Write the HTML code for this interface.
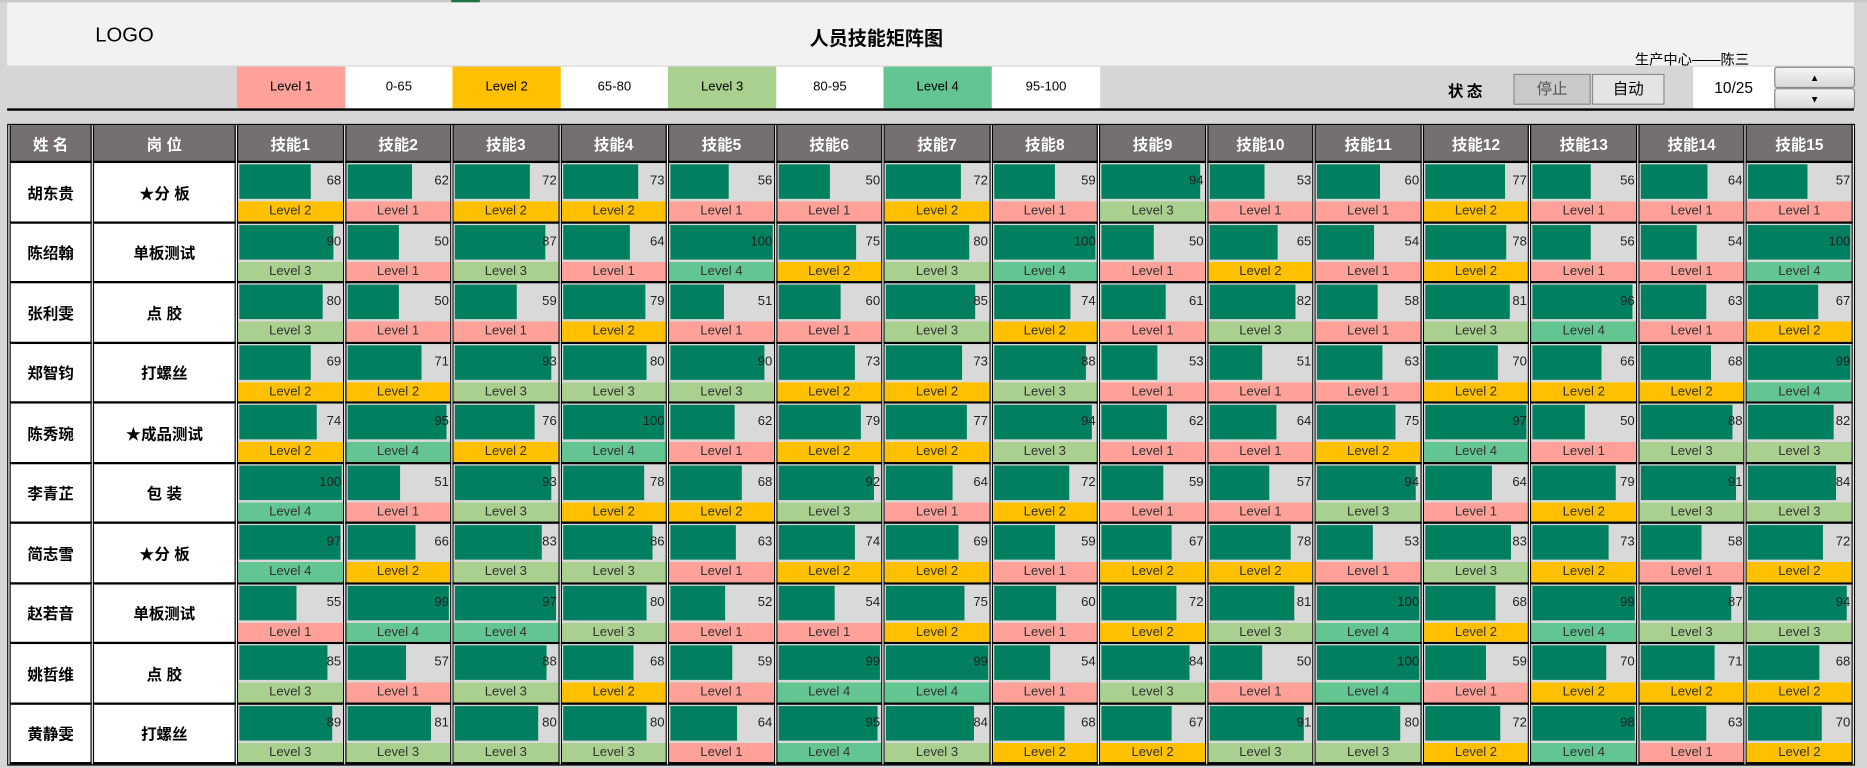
<!DOCTYPE html>
<html><head><meta charset="utf-8"><style>
html,body{margin:0;padding:0;width:1867px;height:768px;overflow:hidden;background:#d6d6d6}
#w{position:absolute;left:0;top:0;width:1568px;height:645px;transform:scale(1.19069);transform-origin:0 0;background:#d6d6d6;font-family:"Liberation Sans","Noto Sans CJK SC",sans-serif}
.a{position:absolute}
#top{left:6px;top:2px;width:1551px;height:53px;background:#f2f2f2}
.lg{position:absolute;top:56px;height:35px;line-height:35px;text-align:center;font-size:11px;color:#000}
.btn{position:absolute;border:1px solid #8c8c8c;font-size:13px;text-align:center;box-sizing:border-box}
table{position:absolute;left:6px;top:104px;width:1552px;border-collapse:separate;border-spacing:1px 0;background:#fff;table-layout:fixed;border:1px solid #000;border-top:1px solid #000}
td,th{padding:0;margin:0}
th{background:#757070;color:#fff;font-size:13px;font-weight:bold;height:30px;border-left:1px solid #000;border-right:1px solid #000;border-bottom:2px solid #000}
td{border-left:1px solid #000;border-right:1px solid #000;border-bottom:2px solid #000;vertical-align:top;height:48.5px}
td.n{font-size:13px;font-weight:bold;text-align:center;vertical-align:middle;background:#fff}
.t{position:relative;height:32px;background:#d9d9d9}
.t i{position:absolute;left:1px;top:1px;height:29px;background:#008060}
.t b{position:absolute;right:1px;top:9px;font-size:11px;font-weight:normal;color:#222}
.l{height:16.5px;line-height:17px;text-align:center;font-size:11px;color:#333}
.l1{background:#ffa198}.l2{background:#ffc000}.l3{background:#a9d08e}.l4{background:#63c592}
</style></head><body><div id="w">
<div class="a" style="left:0;top:0;width:1568px;height:2px;background:#c8c8c8"></div>
<div class="a" style="left:379px;top:0;width:24px;height:2px;background:#217346"></div>
<div class="a" id="top"></div>
<div class="a" style="left:80px;top:20px;font-size:17px">LOGO</div>
<div class="a" style="left:680px;top:19px;font-size:16px;font-weight:bold">人员技能矩阵图</div>
<div class="a" style="left:1373px;top:41px;font-size:12px">生产中心——陈三</div>
<div class="lg l1" style="left:199px;width:91px">Level 1</div>
<div class="lg" style="left:290px;width:90px;background:#fff">0-65</div>
<div class="lg l2" style="left:380px;width:91px">Level 2</div>
<div class="lg" style="left:471px;width:90px;background:#fff">65-80</div>
<div class="lg l3" style="left:561px;width:91px">Level 3</div>
<div class="lg" style="left:652px;width:90px;background:#fff">80-95</div>
<div class="lg l4" style="left:742px;width:91px">Level 4</div>
<div class="lg" style="left:833px;width:91px;background:#fff">95-100</div>
<div class="a" style="left:1216px;top:66px;font-size:13px;font-weight:bold;letter-spacing:3px">状态</div>
<div class="btn" style="left:1271px;top:62px;width:65px;height:26px;line-height:24px;background:#c9c9c9;color:#555">停止</div>
<div class="btn" style="left:1337px;top:62px;width:61px;height:26px;line-height:24px;background:#e4e4e4">自动</div>
<div class="a" style="left:1422px;top:56px;width:68px;height:35px;line-height:36px;background:#fff;text-align:center;font-size:13px">10/25</div>
<div class="btn" style="left:1490px;top:56px;width:68px;height:18px;border-radius:3px;background:linear-gradient(#f4f4f4,#d8d8d8);font-size:8px;line-height:17px">▲</div>
<div class="btn" style="left:1490px;top:74px;width:68px;height:18px;border-radius:3px;background:linear-gradient(#f4f4f4,#d8d8d8);font-size:8px;line-height:18px">▼</div>
<div class="a" style="left:6px;top:91px;width:1551px;height:2px;background:#000"></div>
<table>
<colgroup><col style="width:69px"><col style="width:120px"><col span="15"></colgroup>
<tr><th>姓 名</th><th>岗 位</th><th>技能1</th><th>技能2</th><th>技能3</th><th>技能4</th><th>技能5</th><th>技能6</th><th>技能7</th><th>技能8</th><th>技能9</th><th>技能10</th><th>技能11</th><th>技能12</th><th>技能13</th><th>技能14</th><th>技能15</th></tr>
<tr><td class="n">胡东贵</td><td class="n">★分 板</td>
<td><div class="t"><i style="width:68%"></i><b>68</b></div><div class="l l2">Level 2</div></td>
<td><div class="t"><i style="width:62%"></i><b>62</b></div><div class="l l1">Level 1</div></td>
<td><div class="t"><i style="width:72%"></i><b>72</b></div><div class="l l2">Level 2</div></td>
<td><div class="t"><i style="width:73%"></i><b>73</b></div><div class="l l2">Level 2</div></td>
<td><div class="t"><i style="width:56%"></i><b>56</b></div><div class="l l1">Level 1</div></td>
<td><div class="t"><i style="width:50%"></i><b>50</b></div><div class="l l1">Level 1</div></td>
<td><div class="t"><i style="width:72%"></i><b>72</b></div><div class="l l2">Level 2</div></td>
<td><div class="t"><i style="width:59%"></i><b>59</b></div><div class="l l1">Level 1</div></td>
<td><div class="t"><i style="width:94%"></i><b>94</b></div><div class="l l3">Level 3</div></td>
<td><div class="t"><i style="width:53%"></i><b>53</b></div><div class="l l1">Level 1</div></td>
<td><div class="t"><i style="width:60%"></i><b>60</b></div><div class="l l1">Level 1</div></td>
<td><div class="t"><i style="width:77%"></i><b>77</b></div><div class="l l2">Level 2</div></td>
<td><div class="t"><i style="width:56%"></i><b>56</b></div><div class="l l1">Level 1</div></td>
<td><div class="t"><i style="width:64%"></i><b>64</b></div><div class="l l1">Level 1</div></td>
<td><div class="t"><i style="width:57%"></i><b>57</b></div><div class="l l1">Level 1</div></td></tr>
<tr><td class="n">陈绍翰</td><td class="n">单板测试</td>
<td><div class="t"><i style="width:90%"></i><b>90</b></div><div class="l l3">Level 3</div></td>
<td><div class="t"><i style="width:50%"></i><b>50</b></div><div class="l l1">Level 1</div></td>
<td><div class="t"><i style="width:87%"></i><b>87</b></div><div class="l l3">Level 3</div></td>
<td><div class="t"><i style="width:64%"></i><b>64</b></div><div class="l l1">Level 1</div></td>
<td><div class="t"><i style="width:98%"></i><b>100</b></div><div class="l l4">Level 4</div></td>
<td><div class="t"><i style="width:75%"></i><b>75</b></div><div class="l l2">Level 2</div></td>
<td><div class="t"><i style="width:80%"></i><b>80</b></div><div class="l l3">Level 3</div></td>
<td><div class="t"><i style="width:98%"></i><b>100</b></div><div class="l l4">Level 4</div></td>
<td><div class="t"><i style="width:50%"></i><b>50</b></div><div class="l l1">Level 1</div></td>
<td><div class="t"><i style="width:65%"></i><b>65</b></div><div class="l l2">Level 2</div></td>
<td><div class="t"><i style="width:54%"></i><b>54</b></div><div class="l l1">Level 1</div></td>
<td><div class="t"><i style="width:78%"></i><b>78</b></div><div class="l l2">Level 2</div></td>
<td><div class="t"><i style="width:56%"></i><b>56</b></div><div class="l l1">Level 1</div></td>
<td><div class="t"><i style="width:54%"></i><b>54</b></div><div class="l l1">Level 1</div></td>
<td><div class="t"><i style="width:98%"></i><b>100</b></div><div class="l l4">Level 4</div></td></tr>
<tr><td class="n">张利雯</td><td class="n">点 胶</td>
<td><div class="t"><i style="width:80%"></i><b>80</b></div><div class="l l3">Level 3</div></td>
<td><div class="t"><i style="width:50%"></i><b>50</b></div><div class="l l1">Level 1</div></td>
<td><div class="t"><i style="width:59%"></i><b>59</b></div><div class="l l1">Level 1</div></td>
<td><div class="t"><i style="width:79%"></i><b>79</b></div><div class="l l2">Level 2</div></td>
<td><div class="t"><i style="width:51%"></i><b>51</b></div><div class="l l1">Level 1</div></td>
<td><div class="t"><i style="width:60%"></i><b>60</b></div><div class="l l1">Level 1</div></td>
<td><div class="t"><i style="width:85%"></i><b>85</b></div><div class="l l3">Level 3</div></td>
<td><div class="t"><i style="width:74%"></i><b>74</b></div><div class="l l2">Level 2</div></td>
<td><div class="t"><i style="width:61%"></i><b>61</b></div><div class="l l1">Level 1</div></td>
<td><div class="t"><i style="width:82%"></i><b>82</b></div><div class="l l3">Level 3</div></td>
<td><div class="t"><i style="width:58%"></i><b>58</b></div><div class="l l1">Level 1</div></td>
<td><div class="t"><i style="width:81%"></i><b>81</b></div><div class="l l3">Level 3</div></td>
<td><div class="t"><i style="width:96%"></i><b>96</b></div><div class="l l4">Level 4</div></td>
<td><div class="t"><i style="width:63%"></i><b>63</b></div><div class="l l1">Level 1</div></td>
<td><div class="t"><i style="width:67%"></i><b>67</b></div><div class="l l2">Level 2</div></td></tr>
<tr><td class="n">郑智钧</td><td class="n">打螺丝</td>
<td><div class="t"><i style="width:69%"></i><b>69</b></div><div class="l l2">Level 2</div></td>
<td><div class="t"><i style="width:71%"></i><b>71</b></div><div class="l l2">Level 2</div></td>
<td><div class="t"><i style="width:93%"></i><b>93</b></div><div class="l l3">Level 3</div></td>
<td><div class="t"><i style="width:80%"></i><b>80</b></div><div class="l l3">Level 3</div></td>
<td><div class="t"><i style="width:90%"></i><b>90</b></div><div class="l l3">Level 3</div></td>
<td><div class="t"><i style="width:73%"></i><b>73</b></div><div class="l l2">Level 2</div></td>
<td><div class="t"><i style="width:73%"></i><b>73</b></div><div class="l l2">Level 2</div></td>
<td><div class="t"><i style="width:88%"></i><b>88</b></div><div class="l l3">Level 3</div></td>
<td><div class="t"><i style="width:53%"></i><b>53</b></div><div class="l l1">Level 1</div></td>
<td><div class="t"><i style="width:51%"></i><b>51</b></div><div class="l l1">Level 1</div></td>
<td><div class="t"><i style="width:63%"></i><b>63</b></div><div class="l l1">Level 1</div></td>
<td><div class="t"><i style="width:70%"></i><b>70</b></div><div class="l l2">Level 2</div></td>
<td><div class="t"><i style="width:66%"></i><b>66</b></div><div class="l l2">Level 2</div></td>
<td><div class="t"><i style="width:68%"></i><b>68</b></div><div class="l l2">Level 2</div></td>
<td><div class="t"><i style="width:98%"></i><b>99</b></div><div class="l l4">Level 4</div></td></tr>
<tr><td class="n">陈秀琬</td><td class="n">★成品测试</td>
<td><div class="t"><i style="width:74%"></i><b>74</b></div><div class="l l2">Level 2</div></td>
<td><div class="t"><i style="width:95%"></i><b>95</b></div><div class="l l4">Level 4</div></td>
<td><div class="t"><i style="width:76%"></i><b>76</b></div><div class="l l2">Level 2</div></td>
<td><div class="t"><i style="width:98%"></i><b>100</b></div><div class="l l4">Level 4</div></td>
<td><div class="t"><i style="width:62%"></i><b>62</b></div><div class="l l1">Level 1</div></td>
<td><div class="t"><i style="width:79%"></i><b>79</b></div><div class="l l2">Level 2</div></td>
<td><div class="t"><i style="width:77%"></i><b>77</b></div><div class="l l2">Level 2</div></td>
<td><div class="t"><i style="width:94%"></i><b>94</b></div><div class="l l3">Level 3</div></td>
<td><div class="t"><i style="width:62%"></i><b>62</b></div><div class="l l1">Level 1</div></td>
<td><div class="t"><i style="width:64%"></i><b>64</b></div><div class="l l1">Level 1</div></td>
<td><div class="t"><i style="width:75%"></i><b>75</b></div><div class="l l2">Level 2</div></td>
<td><div class="t"><i style="width:97%"></i><b>97</b></div><div class="l l4">Level 4</div></td>
<td><div class="t"><i style="width:50%"></i><b>50</b></div><div class="l l1">Level 1</div></td>
<td><div class="t"><i style="width:88%"></i><b>88</b></div><div class="l l3">Level 3</div></td>
<td><div class="t"><i style="width:82%"></i><b>82</b></div><div class="l l3">Level 3</div></td></tr>
<tr><td class="n">李青芷</td><td class="n">包 装</td>
<td><div class="t"><i style="width:98%"></i><b>100</b></div><div class="l l4">Level 4</div></td>
<td><div class="t"><i style="width:51%"></i><b>51</b></div><div class="l l1">Level 1</div></td>
<td><div class="t"><i style="width:93%"></i><b>93</b></div><div class="l l3">Level 3</div></td>
<td><div class="t"><i style="width:78%"></i><b>78</b></div><div class="l l2">Level 2</div></td>
<td><div class="t"><i style="width:68%"></i><b>68</b></div><div class="l l2">Level 2</div></td>
<td><div class="t"><i style="width:92%"></i><b>92</b></div><div class="l l3">Level 3</div></td>
<td><div class="t"><i style="width:64%"></i><b>64</b></div><div class="l l1">Level 1</div></td>
<td><div class="t"><i style="width:72%"></i><b>72</b></div><div class="l l2">Level 2</div></td>
<td><div class="t"><i style="width:59%"></i><b>59</b></div><div class="l l1">Level 1</div></td>
<td><div class="t"><i style="width:57%"></i><b>57</b></div><div class="l l1">Level 1</div></td>
<td><div class="t"><i style="width:94%"></i><b>94</b></div><div class="l l3">Level 3</div></td>
<td><div class="t"><i style="width:64%"></i><b>64</b></div><div class="l l1">Level 1</div></td>
<td><div class="t"><i style="width:79%"></i><b>79</b></div><div class="l l2">Level 2</div></td>
<td><div class="t"><i style="width:91%"></i><b>91</b></div><div class="l l3">Level 3</div></td>
<td><div class="t"><i style="width:84%"></i><b>84</b></div><div class="l l3">Level 3</div></td></tr>
<tr><td class="n">简志雪</td><td class="n">★分 板</td>
<td><div class="t"><i style="width:97%"></i><b>97</b></div><div class="l l4">Level 4</div></td>
<td><div class="t"><i style="width:66%"></i><b>66</b></div><div class="l l2">Level 2</div></td>
<td><div class="t"><i style="width:83%"></i><b>83</b></div><div class="l l3">Level 3</div></td>
<td><div class="t"><i style="width:86%"></i><b>86</b></div><div class="l l3">Level 3</div></td>
<td><div class="t"><i style="width:63%"></i><b>63</b></div><div class="l l1">Level 1</div></td>
<td><div class="t"><i style="width:74%"></i><b>74</b></div><div class="l l2">Level 2</div></td>
<td><div class="t"><i style="width:69%"></i><b>69</b></div><div class="l l2">Level 2</div></td>
<td><div class="t"><i style="width:59%"></i><b>59</b></div><div class="l l1">Level 1</div></td>
<td><div class="t"><i style="width:67%"></i><b>67</b></div><div class="l l2">Level 2</div></td>
<td><div class="t"><i style="width:78%"></i><b>78</b></div><div class="l l2">Level 2</div></td>
<td><div class="t"><i style="width:53%"></i><b>53</b></div><div class="l l1">Level 1</div></td>
<td><div class="t"><i style="width:83%"></i><b>83</b></div><div class="l l3">Level 3</div></td>
<td><div class="t"><i style="width:73%"></i><b>73</b></div><div class="l l2">Level 2</div></td>
<td><div class="t"><i style="width:58%"></i><b>58</b></div><div class="l l1">Level 1</div></td>
<td><div class="t"><i style="width:72%"></i><b>72</b></div><div class="l l2">Level 2</div></td></tr>
<tr><td class="n">赵若音</td><td class="n">单板测试</td>
<td><div class="t"><i style="width:55%"></i><b>55</b></div><div class="l l1">Level 1</div></td>
<td><div class="t"><i style="width:98%"></i><b>99</b></div><div class="l l4">Level 4</div></td>
<td><div class="t"><i style="width:97%"></i><b>97</b></div><div class="l l4">Level 4</div></td>
<td><div class="t"><i style="width:80%"></i><b>80</b></div><div class="l l3">Level 3</div></td>
<td><div class="t"><i style="width:52%"></i><b>52</b></div><div class="l l1">Level 1</div></td>
<td><div class="t"><i style="width:54%"></i><b>54</b></div><div class="l l1">Level 1</div></td>
<td><div class="t"><i style="width:75%"></i><b>75</b></div><div class="l l2">Level 2</div></td>
<td><div class="t"><i style="width:60%"></i><b>60</b></div><div class="l l1">Level 1</div></td>
<td><div class="t"><i style="width:72%"></i><b>72</b></div><div class="l l2">Level 2</div></td>
<td><div class="t"><i style="width:81%"></i><b>81</b></div><div class="l l3">Level 3</div></td>
<td><div class="t"><i style="width:98%"></i><b>100</b></div><div class="l l4">Level 4</div></td>
<td><div class="t"><i style="width:68%"></i><b>68</b></div><div class="l l2">Level 2</div></td>
<td><div class="t"><i style="width:98%"></i><b>99</b></div><div class="l l4">Level 4</div></td>
<td><div class="t"><i style="width:87%"></i><b>87</b></div><div class="l l3">Level 3</div></td>
<td><div class="t"><i style="width:94%"></i><b>94</b></div><div class="l l3">Level 3</div></td></tr>
<tr><td class="n">姚哲维</td><td class="n">点 胶</td>
<td><div class="t"><i style="width:85%"></i><b>85</b></div><div class="l l3">Level 3</div></td>
<td><div class="t"><i style="width:57%"></i><b>57</b></div><div class="l l1">Level 1</div></td>
<td><div class="t"><i style="width:88%"></i><b>88</b></div><div class="l l3">Level 3</div></td>
<td><div class="t"><i style="width:68%"></i><b>68</b></div><div class="l l2">Level 2</div></td>
<td><div class="t"><i style="width:59%"></i><b>59</b></div><div class="l l1">Level 1</div></td>
<td><div class="t"><i style="width:98%"></i><b>99</b></div><div class="l l4">Level 4</div></td>
<td><div class="t"><i style="width:98%"></i><b>99</b></div><div class="l l4">Level 4</div></td>
<td><div class="t"><i style="width:54%"></i><b>54</b></div><div class="l l1">Level 1</div></td>
<td><div class="t"><i style="width:84%"></i><b>84</b></div><div class="l l3">Level 3</div></td>
<td><div class="t"><i style="width:50%"></i><b>50</b></div><div class="l l1">Level 1</div></td>
<td><div class="t"><i style="width:98%"></i><b>100</b></div><div class="l l4">Level 4</div></td>
<td><div class="t"><i style="width:59%"></i><b>59</b></div><div class="l l1">Level 1</div></td>
<td><div class="t"><i style="width:70%"></i><b>70</b></div><div class="l l2">Level 2</div></td>
<td><div class="t"><i style="width:71%"></i><b>71</b></div><div class="l l2">Level 2</div></td>
<td><div class="t"><i style="width:68%"></i><b>68</b></div><div class="l l2">Level 2</div></td></tr>
<tr><td class="n">黄静雯</td><td class="n">打螺丝</td>
<td><div class="t"><i style="width:89%"></i><b>89</b></div><div class="l l3">Level 3</div></td>
<td><div class="t"><i style="width:81%"></i><b>81</b></div><div class="l l3">Level 3</div></td>
<td><div class="t"><i style="width:80%"></i><b>80</b></div><div class="l l3">Level 3</div></td>
<td><div class="t"><i style="width:80%"></i><b>80</b></div><div class="l l3">Level 3</div></td>
<td><div class="t"><i style="width:64%"></i><b>64</b></div><div class="l l1">Level 1</div></td>
<td><div class="t"><i style="width:95%"></i><b>95</b></div><div class="l l4">Level 4</div></td>
<td><div class="t"><i style="width:84%"></i><b>84</b></div><div class="l l3">Level 3</div></td>
<td><div class="t"><i style="width:68%"></i><b>68</b></div><div class="l l2">Level 2</div></td>
<td><div class="t"><i style="width:67%"></i><b>67</b></div><div class="l l2">Level 2</div></td>
<td><div class="t"><i style="width:91%"></i><b>91</b></div><div class="l l3">Level 3</div></td>
<td><div class="t"><i style="width:80%"></i><b>80</b></div><div class="l l3">Level 3</div></td>
<td><div class="t"><i style="width:72%"></i><b>72</b></div><div class="l l2">Level 2</div></td>
<td><div class="t"><i style="width:98%"></i><b>98</b></div><div class="l l4">Level 4</div></td>
<td><div class="t"><i style="width:63%"></i><b>63</b></div><div class="l l1">Level 1</div></td>
<td><div class="t"><i style="width:70%"></i><b>70</b></div><div class="l l2">Level 2</div></td></tr>
</table>
</div></body></html>
